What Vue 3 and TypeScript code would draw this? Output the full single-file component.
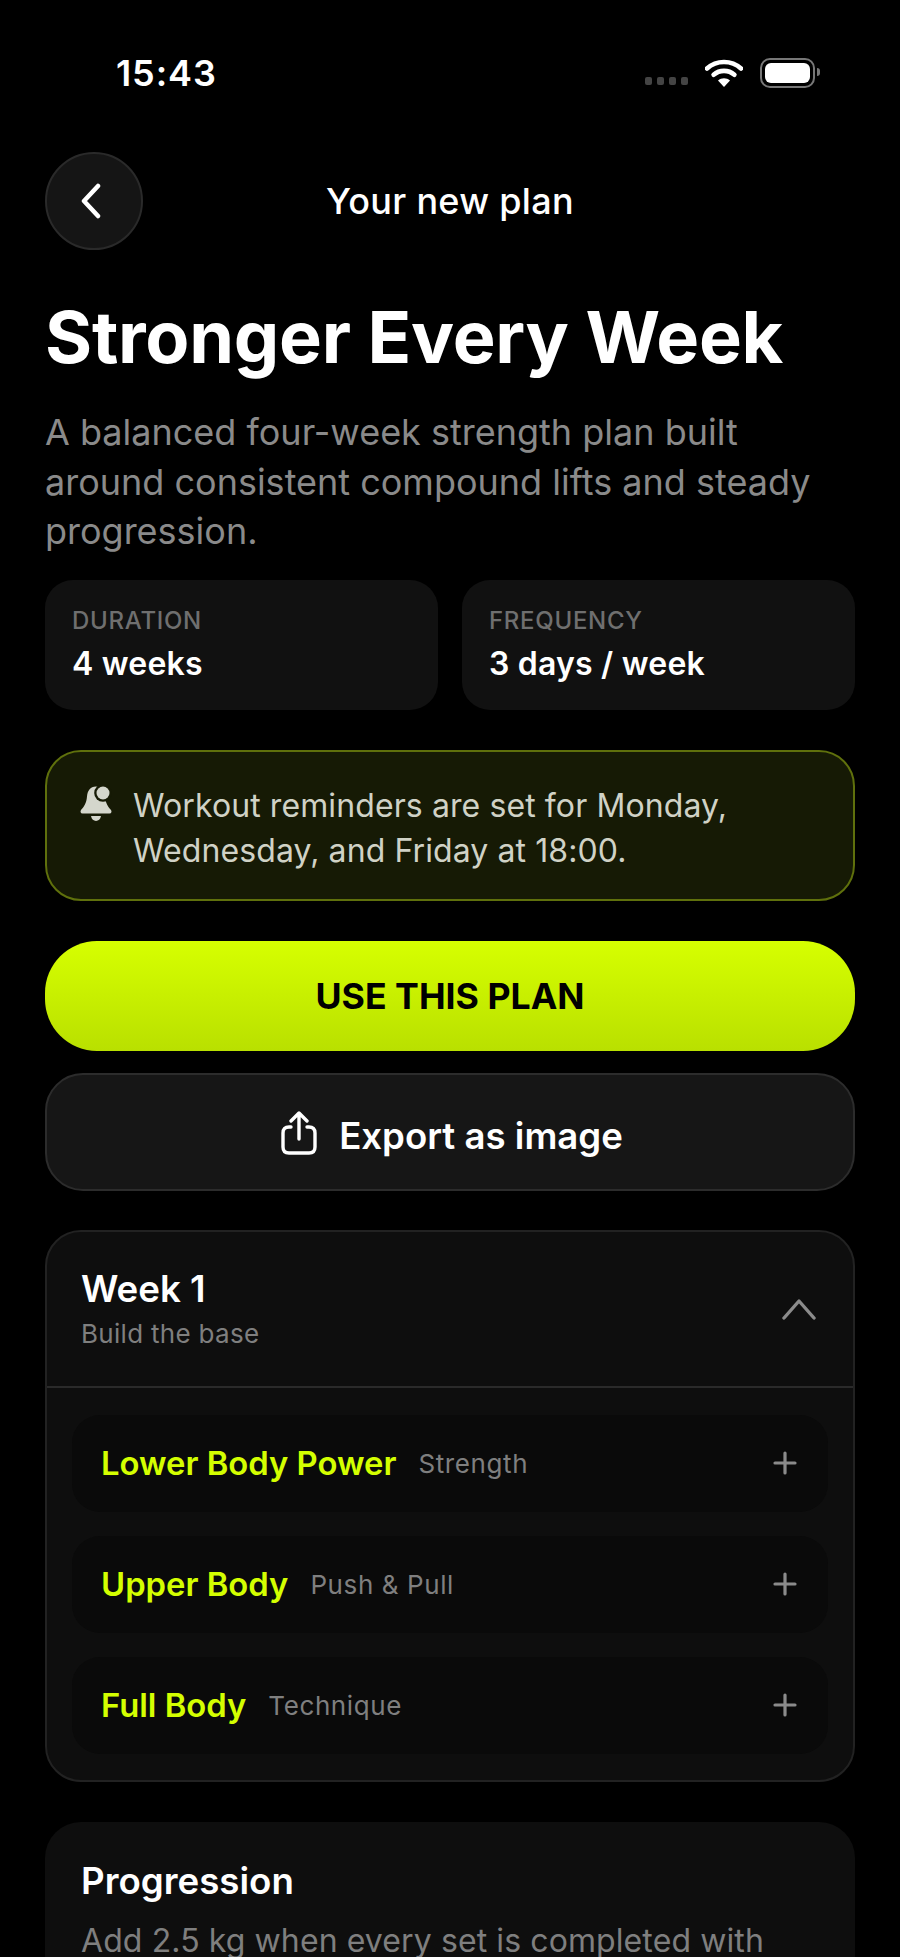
<script setup lang="ts">
const metrics = [
  { label: "DURATION", value: "4 weeks" },
  { label: "FREQUENCY", value: "3 days / week" },
];

const workouts = [
  { name: "Lower Body Power", focus: "Strength" },
  { name: "Upper Body", focus: "Push & Pull" },
  { name: "Full Body", focus: "Technique" },
];
</script>

<template>
  <div class="screen">
    <div class="status">
      <span class="time">15:43</span>
      <div class="status-icons">
        <div class="signal"><i></i><i></i><i></i><i></i></div>
        <svg class="wifi" width="38" height="28" viewBox="0 0 38 28">
          <path d="M2 9.5C11.5 .8 26.5 .8 36 9.5" fill="none" stroke="#fff" stroke-width="4.6" stroke-linecap="round" />
          <path d="M8.6 15.8C14.6 10.6 23.4 10.6 29.4 15.8" fill="none" stroke="#fff" stroke-width="4.6" stroke-linecap="round" />
          <path d="M13 21.6C16.6 18.6 21.4 18.6 25 21.6L19 28Z" fill="#fff" />
        </svg>
        <div class="battery"><span></span></div>
      </div>
    </div>

    <header class="nav">
      <button class="back" type="button">
        <svg width="24" height="36" viewBox="0 0 24 36">
          <path d="M19 3L5 18L19 33" fill="none" stroke="#fff" stroke-width="4.500" stroke-linecap="round" stroke-linejoin="round" />
        </svg>
      </button>
      <span class="nav-title">Your new plan</span>
    </header>

    <h1 class="title">Stronger Every Week</h1>
    <p class="desc">A balanced four-week strength plan built around consistent compound lifts and steady progression.</p>

    <div class="metrics">
      <div v-for="m in metrics" :key="m.label" class="metric">
        <span class="metric-label">{{ m.label }}</span>
        <span class="metric-value">{{ m.value }}</span>
      </div>
    </div>

    <div class="notice">
      <svg class="bell" width="32" height="37" viewBox="0 0 32 37">
        <path d="M16 1.500C10 1.500 7.500 6 7 11.500C6.500 18 4 22 1 25C0 26.500 .5 28.500 2.500 28.500H29.500C31.500 28.500 32 26.500 31 25C28 22 25.500 18 25 11.500C24.500 6 22 1.500 16 1.500Z" fill="#d4d6cc" />
        <path d="M11 31H21C20 37.500 12 37.500 11 31Z" fill="#d4d6cc" />
        <circle cx="23" cy="8" r="8.800" fill="#161a05" />
        <circle cx="23" cy="8" r="6.500" fill="#d4d6cc" />
      </svg>
      <p>Workout reminders are set for Monday, Wednesday, and Friday at 18:00.</p>
    </div>

    <button class="primary" type="button">USE THIS PLAN</button>
    <button class="secondary" type="button">
      <svg width="36" height="44" viewBox="0 0 36 44">
        <path d="M10 16H8C4 16 2 18 2 22V36C2 40 4 42 8 42H28C32 42 34 40 34 36V22C34 18 32 16 28 16H26" fill="none" stroke="#fff" stroke-width="3.400" stroke-linecap="round" />
        <path d="M18 28V3M10 10L18 2L26 10" fill="none" stroke="#fff" stroke-width="3.400" stroke-linecap="round" stroke-linejoin="round" />
      </svg>
      <span>Export as image</span>
    </button>

    <section class="week">
      <div class="week-head">
        <div>
          <h2>Week 1</h2>
          <span>Build the base</span>
        </div>
        <svg width="34" height="22" viewBox="0 0 34 22">
          <path d="M2 20L17 3L32 20" fill="none" stroke="#8b8b8b" stroke-width="3.400" stroke-linecap="round" stroke-linejoin="round" />
        </svg>
      </div>
      <div class="week-body">
        <div v-for="w in workouts" :key="w.name" class="workout">
          <span class="workout-name">{{ w.name }}</span>
          <span class="workout-focus">{{ w.focus }}</span>
          <svg class="plus" width="24" height="24" viewBox="0 0 24 24">
            <path d="M12 2V22M2 12H22" fill="none" stroke="#8b8b8b" stroke-width="3.200" stroke-linecap="round" />
          </svg>
        </div>
      </div>
    </section>

    <section class="progress">
      <h2>Progression</h2>
      <p>Add 2.5 kg when every set is completed with good form and control.</p>
    </section>
  </div>
</template>

<style>
html,
body {
  margin: 0;
  background: #000;
}
</style>

<style scoped>
.screen {
  width: 900px;
  height: 1957px;
  box-sizing: border-box;
  overflow: hidden;
  padding: 0 45px;
  background: #000;
  color: #fff;
  font-family: Inter, "Liberation Sans", sans-serif;
}

h1,
h2,
p {
  margin: 0;
}

button {
  font-family: inherit;
  cursor: pointer;
}

.status {
  padding-top: 50px;
  display: flex;
  justify-content: space-between;
  align-items: center;
  height: 46px;
  margin: 0 40px 0 71px;
}

.time {
  font-size: 36px;
  font-weight: 600;
  letter-spacing: 0.9px;
}

.status-icons {
  display: flex;
  align-items: center;
  gap: 17px;
}

.signal {
  display: flex;
  gap: 5px;
  margin-top: 16px;
}

.signal i {
  width: 7px;
  height: 8px;
  border-radius: 2px;
  background: #444;
}

.battery {
  position: relative;
  width: 55px;
  height: 30px;
  box-sizing: border-box;
  border: 2px solid #777;
  border-radius: 10px;
  padding: 3px;
}

.battery span {
  display: block;
  height: 100%;
  border-radius: 6px;
  background: #fff;
}

.battery::after {
  content: "";
  position: absolute;
  right: -7px;
  top: 8px;
  width: 3px;
  height: 8px;
  border-radius: 0 3px 3px 0;
  background: #777;
}

.nav {
  display: grid;
  grid-template-columns: 98px 1fr 98px;
  align-items: center;
  margin-top: 56px;
}

.back {
  width: 98px;
  height: 98px;
  padding: 0;
  display: flex;
  align-items: center;
  justify-content: center;
  border: 2px solid #2a2a2a;
  border-radius: 50%;
  background: #151515;
}

.back svg {
  margin-right: 6px;
}

.nav-title {
  text-align: center;
  font-size: 36px;
  font-weight: 550;
  letter-spacing: 0.3px;
}

.title {
  margin-top: 48px;
  font-size: 72px;
  line-height: 78px;
  font-weight: 700;
  letter-spacing: -0.25px;
}

.desc {
  margin-top: 32px;
  font-size: 36px;
  line-height: 49.500px;
  color: #8a8a8a;
}

.metrics {
  display: grid;
  grid-template-columns: 1fr 1fr;
  gap: 24px;
  margin-top: 23px;
}

.metric {
  height: 130px;
  box-sizing: border-box;
  padding: 27px 27px 0;
  display: flex;
  flex-direction: column;
  gap: 9px;
  border-radius: 28px;
  background: #111;
}

.metric-label {
  font-size: 24px;
  line-height: 28px;
  font-weight: 500;
  letter-spacing: 0.7px;
  color: #6f6f6f;
}

.metric-value {
  font-size: 32px;
  line-height: 40px;
  font-weight: 600;
  letter-spacing: 0.2px;
}

.notice {
  margin-top: 40px;
  height: 151px;
  box-sizing: border-box;
  padding: 31px 30px 0 33px;
  display: flex;
  gap: 21px;
  border: 2px solid #5f700c;
  border-radius: 36px;
  background: #161a05;
}

.bell {
  flex: none;
  margin-top: 2px;
}

.notice p {
  font-size: 32px;
  line-height: 45px;
  letter-spacing: 0.1px;
  color: #d0d2c6;
}

.primary {
  display: block;
  width: 100%;
  height: 110px;
  margin-top: 40px;
  border: 0;
  border-radius: 52px;
  background: linear-gradient(#d6ff00, #b9e000);
  color: #000;
  font-size: 35.700px;
  font-weight: 700;
}

.secondary {
  width: 100%;
  height: 118px;
  margin-top: 22px;
  padding: 3px 0 0 4px;
  display: flex;
  align-items: center;
  justify-content: center;
  gap: 22px;
  border: 2px solid #2c2c2c;
  border-radius: 38px;
  background: #161616;
  color: #fff;
  font-size: 36.600px;
  font-weight: 600;
}

.secondary span {
  margin-top: 5px;
}

.week {
  margin-top: 39px;
  height: 552px;
  box-sizing: border-box;
  border: 2px solid #222;
  border-radius: 36px;
  background: #0e0e0e;
}

.week-head {
  height: 156px;
  box-sizing: border-box;
  padding: 0 37px 0 34px;
  display: flex;
  justify-content: space-between;
  align-items: center;
  border-bottom: 2px solid #2a2a2a;
}

.week-head h2 {
  font-size: 36.700px;
  line-height: 44px;
  font-weight: 600;
}

.week-head span {
  display: block;
  margin-top: 7px;
  font-size: 26px;
  line-height: 32px;
  letter-spacing: 0.3px;
  color: #7f7f7f;
}

.week-body {
  padding: 27px 25px 0;
  display: flex;
  flex-direction: column;
  gap: 24px;
}

.workout {
  height: 97px;
  padding: 0 31px 0 29px;
  display: flex;
  align-items: center;
  gap: 22px;
  border-radius: 28px;
  background: #0a0a0a;
}

.workout-name {
  font-size: 32.800px;
  font-weight: 600;
  color: #d4ff00;
}

.workout-focus {
  font-size: 26px;
  letter-spacing: 0.6px;
  color: #7f7f7f;
}

.plus {
  margin-left: auto;
}

.progress {
  margin-top: 40px;
  padding: 37px 36px;
  border-radius: 36px;
  background: #0e0e0e;
}

.progress h2 {
  font-size: 36.700px;
  line-height: 44px;
  font-weight: 600;
}

.progress p {
  margin-top: 15px;
  font-size: 32px;
  line-height: 45px;
  letter-spacing: 0.1px;
  color: #7f7f7f;
}
</style>
